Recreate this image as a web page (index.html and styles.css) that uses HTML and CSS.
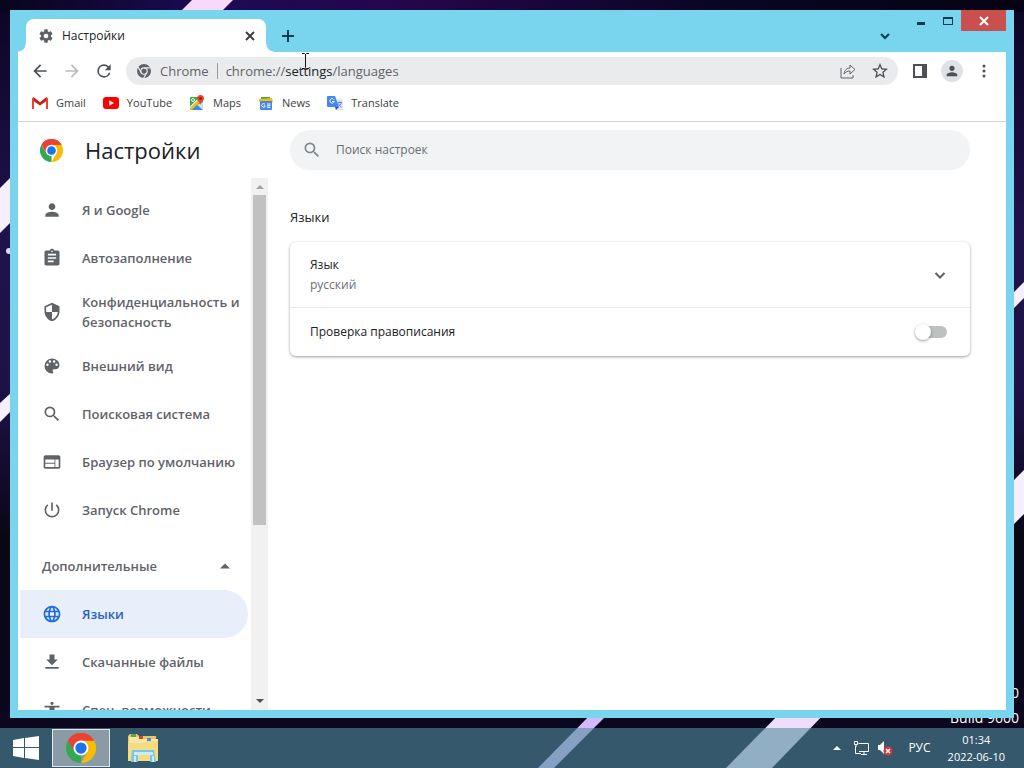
FILE: index.html
```html
<!DOCTYPE html>
<html lang="ru">

<head>
    <meta charset="UTF-8">
    <meta name="viewport" content="width=device-width, initial-scale=1.0">
    <title>Настройки</title>
    <link rel="stylesheet" href="styles.css">
</head>

<body>
    <!-- shared icons -->
    <svg class="defs" width="0" height="0" aria-hidden="true">
        <symbol id="chrome" viewBox="0 0 48 48">
            <path fill="#ea4335" d="M24 24 3.2 12A24 24 0 0 1 44.8 12z" />
            <path fill="#34a853" d="M24 24 24 48A24 24 0 0 1 3.2 12L13.600 30z" />
            <path fill="#fbbc04" d="M24 24 24 12H44.8A24 24 0 0 1 24 48L34.400 30z" />
            <path fill="#ea4335" d="M3.2 12A24 24 0 0 1 44.8 12H24L13.600 30z" />
            <circle cx="24" cy="24" r="12" fill="#fff" />
            <circle cx="24" cy="24" r="9" fill="#1a73e8" />
        </symbol>
        <symbol id="search" viewBox="0 0 24 24">
            <path d="M15.500 14h-.79l-.28-.27A6.470 6.470 0 0 0 16 9.500 6.500 6.500 0 1 0 9.500 16c1.610 0 3.090-.59 4.230-1.570l.27.28v.79l5 4.990L20.490 19l-4.990-5zm-6 0C7.010 14 5 11.990 5 9.500S7.010 5 9.500 5 14 7.010 14 9.500 11.990 14 9.500 14z" />
        </symbol>
        <symbol id="person" viewBox="0 0 24 24">
            <path d="M12 12c2.210 0 4-1.790 4-4s-1.790-4-4-4-4 1.790-4 4 1.790 4 4 4zm0 2c-2.670 0-8 1.340-8 4v2h16v-2c0-2.660-5.330-4-8-4z" />
        </symbol>
    </svg>

    <div class="desktop">
        <svg class="wallpaper" viewBox="0 0 1024 768" preserveAspectRatio="none" aria-hidden="true">
            <defs>
                <linearGradient id="night" x1="0" y1="0" x2="0" y2="1">
                    <stop offset="0" stop-color="#0b0524" />
                    <stop offset=".3" stop-color="#21124d" />
                    <stop offset=".52" stop-color="#1d1144" />
                    <stop offset=".7" stop-color="#090716" />
                    <stop offset="1" stop-color="#0b0720" />
                </linearGradient>
                <linearGradient id="glow" x1="0" y1="0" x2="1" y2="0">
                    <stop offset="0" stop-color="#08051c" />
                    <stop offset=".2" stop-color="#1d0a55" />
                    <stop offset=".4" stop-color="#25064b" />
                    <stop offset=".7" stop-color="#0a0524" />
                    <stop offset="1" stop-color="#050313" />
                </linearGradient>
            </defs>
            <rect width="1024" height="768" fill="url(#night)" />
            <rect width="1024" height="12" fill="url(#glow)" />
            <path fill="#f6d9fb" d="M192 0h41l-12 12h-41z" />
            <path fill="#f6efff" d="M0 188 12 176V221L0 233zM0 403 12 392V410L0 422zM1012 294 1024 282V298L1012 310zM1012 482 1024 470V514L1012 526z" />
            <path fill="#d3b8fb" d="M597 708h17L554 768H538z" />
            <path fill="#f0dcfb" d="M785 708h45L772 768H726z" />
            <circle cx="9" cy="251" r="3" fill="#e4d8f8" />
        </svg>
        <p class="watermark">0<br>Build 9600</p>

        <div class="window">
            <header class="titlebar">
                <div class="tab">
                    <svg class="icon-16" viewBox="0 0 24 24">
                        <path d="M19.430 12.980c.04-.32.07-.64.07-.98s-.03-.66-.07-.98l2.110-1.650c.19-.15.24-.42.12-.64l-2-3.460c-.12-.22-.39-.3-.61-.22l-2.490 1c-.52-.4-1.080-.73-1.690-.98l-.38-2.650A.49.49 0 0 0 14 2h-4c-.25 0-.46.18-.49.42l-.38 2.650c-.61.25-1.170.59-1.690.98l-2.490-1c-.23-.09-.49 0-.61.22l-2 3.460c-.13.22-.07.49.12.64l2.110 1.650c-.04.32-.07.65-.07.98s.03.66.07.98l-2.110 1.650c-.19.15-.24.42-.12.64l2 3.460c.12.22.39.3.61.22l2.490-1c.52.4 1.080.73 1.690.98l.38 2.650c.03.24.24.42.49.42h4c.25 0 .46-.18.49-.42l.38-2.650c.61-.25 1.170-.59 1.690-.98l2.490 1c.23.09.49 0 .61-.22l2-3.460c.12-.22.07-.49-.12-.64zM12 15.500a3.500 3.500 0 1 1 0-7 3.500 3.500 0 0 1 0 7z" />
                    </svg>
                    <span class="tab-title">Настройки</span>
                    <button class="icon-btn" aria-label="Закрыть вкладку">
                        <svg class="icon-16 line" viewBox="0 0 16 16"><path d="M4 4l8 8M12 4l-8 8" /></svg>
                    </button>
                </div>
                <button class="icon-btn new-tab" aria-label="Новая вкладка">
                    <svg class="icon-16 line" viewBox="0 0 16 16"><path d="M8 2v12M2 8h12" /></svg>
                </button>
                <button class="icon-btn tab-search" aria-label="Поиск вкладок">
                    <svg class="icon-16 line" viewBox="0 0 16 16"><path d="M4 6l4 4 4-4" /></svg>
                </button>
                <div class="window-buttons">
                    <button class="win-btn" aria-label="Свернуть">
                        <svg width="12" height="12"><path fill="#0c3a50" d="M2 7h8v3H2z" /></svg>
                    </button>
                    <button class="win-btn" aria-label="Развернуть">
                        <svg width="12" height="12"><path fill="#0c3a50" fill-rule="evenodd" d="M1 2h10v8H1zM2 4v5h8V4z" /></svg>
                    </button>
                    <button class="win-btn close" aria-label="Закрыть">
                        <svg width="10" height="10" stroke="#fff" stroke-width="2"><path d="M1 1l8 8M9 1l-8 8" /></svg>
                    </button>
                </div>
            </header>

            <div class="toolbar">
                <button class="icon-btn" aria-label="Назад">
                    <svg class="icon-20" viewBox="0 0 24 24"><path d="M20 11H7.830l5.590-5.590L12 4l-8 8 8 8 1.410-1.410L7.830 13H20v-2z" /></svg>
                </button>
                <button class="icon-btn" aria-label="Вперёд" disabled>
                    <svg class="icon-20" viewBox="0 0 24 24"><path d="M12 4l-1.410 1.410L16.170 11H4v2h12.170l-5.580 5.590L12 20l8-8z" /></svg>
                </button>
                <button class="icon-btn" aria-label="Обновить">
                    <svg class="icon-20" viewBox="0 0 24 24"><path d="M17.650 6.350A7.960 7.960 0 0 0 12 4a8 8 0 1 0 7.730 10h-2.080A6 6 0 1 1 12 6c1.660 0 3.140.69 4.220 1.780L13 11h7V4z" /></svg>
                </button>
                <div class="omnibox">
                    <svg class="icon-14" viewBox="0 0 48 48">
                        <circle cx="24" cy="24" r="24" />
                        <g fill="none" stroke="#e9ebed" stroke-width="4">
                            <circle cx="24" cy="24" r="11" />
                            <path d="M24 13h22M14.500 29.500 3.500 10.400M33.500 29.500 22.500 48.600" />
                        </g>
                    </svg>
                    <span class="origin">Chrome</span>
                    <div class="url" role="textbox" aria-label="Адресная строка" contenteditable="true" spellcheck="false">chrome://<b>settings</b>/languages</div>
                    <button class="icon-btn" aria-label="Поделиться">
                        <svg class="icon-16 line thin" viewBox="0 0 16 16"><path d="M1 5v10h12v-3M4 11c.5-4 3-6 6-6V2l5 4.500-5 4.500V8c-2.500 0-4.500 1-6 3z" /></svg>
                    </button>
                    <button class="icon-btn" aria-label="Добавить в закладки">
                        <svg class="icon-16" viewBox="2 2 20 20"><path d="M22 9.240l-7.190-.62L12 2 9.190 8.630 2 9.240l5.460 4.730L5.820 21 12 17.270 18.180 21l-1.630-7.030zM12 15.400l-3.760 2.270 1-4.280-3.320-2.880 4.380-.38L12 6.100l1.710 4.040 4.380.38-3.320 2.880 1 4.280z" /></svg>
                    </button>
                </div>
                <button class="icon-btn" aria-label="Боковая панель">
                    <svg class="icon-16" viewBox="0 0 16 16"><path fill-rule="evenodd" d="M1 1h14v14H1zM3 3v10h7V3z" /></svg>
                </button>
                <button class="icon-btn profile" aria-label="Профиль">
                    <svg class="icon-16"><use href="#person" /></svg>
                </button>
                <button class="icon-btn" aria-label="Меню">
                    <svg class="icon-16" viewBox="0 0 16 16"><circle cx="8" cy="3" r="1.500" /><circle cx="8" cy="8" r="1.500" /><circle cx="8" cy="13" r="1.500" /></svg>
                </button>
            </div>

            <nav class="bookmarks">
                <a href="#">
                    <svg class="icon-16" viewBox="0 0 16 16">
                        <path fill="#c5221f" d="M0 3.500 1.500 2 8 7.300 14.500 2 16 3.500V5L8 10.500 0 5z" />
                        <path fill="#fff" d="M3 2h10L8 6z" />
                        <path fill="#ea4335" d="M0 3h2v11H0zM14 3h2v11h-2z" />
                    </svg>Gmail
                </a>
                <a href="#">
                    <svg class="icon-16" viewBox="0 0 16 16">
                        <rect y="2" width="16" height="12" rx="3" fill="#f00" />
                        <path fill="#fff" d="M6.300 5.300v5.400L11 8z" />
                    </svg>YouTube
                </a>
                <a href="#">
                    <svg class="icon-16" viewBox="0 0 16 16">
                        <rect x="1" y="2" width="13" height="13" rx="1" fill="#34a853" />
                        <path fill="#fbbc04" d="M1 13 12 2l2 2L3 15H1z" />
                        <path fill="#fff" d="M1 11.500 10.500 2H12L1 13z" />
                        <path fill="#d5dde8" d="M8 10l6 5V7z" />
                        <path fill="#4285f4" d="M3 15l5-5 5 5z" />
                        <circle cx="4" cy="5" r="1.500" fill="none" stroke="#fff" />
                        <path fill="#ea4335" d="M11.500 0A3.500 3.500 0 0 0 8 3.500C8 6 11 7 11.500 10 12 7 15 6 15 3.500A3.500 3.500 0 0 0 11.500 0z" />
                        <circle cx="11.500" cy="3.500" r="1.300" fill="#811411" />
                    </svg>Maps
                </a>
                <a href="#">
                    <svg class="icon-16" viewBox="0 0 16 16">
                        <path fill="#34a853" d="M3 2h9v5H3z" />
                        <path fill="#fbbc04" d="M1 4l13-1 1 4H1z" />
                        <rect x="2" y="6" width="12" height="9" rx="1" fill="#4285f4" />
                        <path fill="none" stroke="#fff" d="M7 9.300A1.800 1.800 0 1 0 7.300 11H5.800" />
                        <path stroke="#fff" d="M9 9h3.500M9 10.700h3.500M9 12.400h3.500" />
                    </svg>News
                </a>
                <a href="#">
                    <svg class="icon-16" viewBox="0 0 16 16">
                        <path fill="#e4e6ea" d="M6 4h8.500L16 5v10H9z" />
                        <path fill="#4285f4" d="M1 1h7l4 11H1a1 1 0 0 1-1-1V2a1 1 0 0 1 1-1z" />
                        <path fill="#1a56b8" d="M8 12h4l-3 3z" />
                        <path fill="none" stroke="#fff" d="M7 4.700A2.200 2.200 0 1 0 7.200 6.500H5" />
                        <path fill="none" stroke="#4285f4" d="M10.500 7.500H15M13 6.500v1M14.500 7.500c-.5 2-2 3-3 3.500M11.500 8.500c.5 1.500 2 3 3 3.500" />
                    </svg>Translate
                </a>
            </nav>

            <div class="settings">
                <aside class="sidebar">
                    <div class="brand">
                        <svg class="logo"><use href="#chrome" /></svg>
                        <h1>Настройки</h1>
                    </div>
                    <div class="menu-scroller">
                        <nav class="menu">
                            <a href="#"><svg class="icon-20"><use href="#person" /></svg>Я и Google</a>
                            <a href="#">
                                <svg class="icon-20" viewBox="0 0 24 24"><path d="M19 3h-4.180C14.400 1.840 13.300 1 12 1s-2.400.84-2.820 2H5a2 2 0 0 0-2 2v14c0 1.100.9 2 2 2h14a2 2 0 0 0 2-2V5a2 2 0 0 0-2-2zm-7 0a1 1 0 1 1 0 2 1 1 0 0 1 0-2zm2 14H7v-2h7zm3-4H7v-2h10zm0-4H7V7h10z" /></svg>Автозаполнение
                            </a>
                            <a href="#" class="two-line">
                                <svg class="icon-20" viewBox="0 0 24 24"><path d="M12 1 3 5v6c0 5.550 3.840 10.740 9 12 5.160-1.260 9-6.450 9-12V5zm0 10.990h7c-.53 4.120-3.280 7.790-7 8.940V12H5V6.300l7-3.110z" /></svg>Конфиденциальность и безопасность
                            </a>
                            <a href="#">
                                <svg class="icon-20" viewBox="0 0 24 24"><path d="M12 3a9 9 0 0 0-9 9 9 9 0 0 0 9 9c.83 0 1.500-.67 1.500-1.500 0-.39-.15-.74-.39-1.010a1.490 1.490 0 0 1 1.110-2.490H16c2.760 0 5-2.240 5-5 0-4.420-4.030-8-9-8zM6.500 12a1.500 1.500 0 1 1 0-3 1.500 1.500 0 0 1 0 3zm3-4a1.500 1.500 0 1 1 0-3 1.500 1.500 0 0 1 0 3zm5 0a1.500 1.500 0 1 1 0-3 1.500 1.500 0 0 1 0 3zm3 4a1.500 1.500 0 1 1 0-3 1.500 1.500 0 0 1 0 3z" /></svg>Внешний вид
                            </a>
                            <a href="#"><svg class="icon-20"><use href="#search" /></svg>Поисковая система</a>
                            <a href="#">
                                <svg class="icon-20" viewBox="0 0 24 24"><path d="M20 4H4a2 2 0 0 0-2 2v12c0 1.100.9 2 2 2h16a2 2 0 0 0 2-2V6a2 2 0 0 0-2-2zm-5 14H4v-4h11zm0-5H4V9h11zm5 5h-4V9h4z" /></svg>Браузер по умолчанию
                            </a>
                            <a href="#">
                                <svg class="icon-20" viewBox="0 0 24 24"><path d="M13 3h-2v10h2zm4.830 2.170-1.420 1.420A6.920 6.920 0 0 1 19 12a7 7 0 1 1-11.420-5.420L6.170 5.170A8.930 8.930 0 0 0 3 12a9 9 0 0 0 18 0c0-2.740-1.230-5.180-3.170-6.830z" /></svg>Запуск Chrome
                            </a>
                            <button class="advanced">
                                Дополнительные
                                <svg width="10" height="6"><path d="M0 5.500 5 .5l5 5z" /></svg>
                            </button>
                            <a href="#" class="selected">
                                <svg class="icon-20" viewBox="0 0 24 24"><path d="M11.990 2C6.470 2 2 6.480 2 12s4.470 10 9.990 10C17.520 22 22 17.520 22 12S17.520 2 11.990 2zm6.930 6h-2.950a15.650 15.650 0 0 0-1.380-3.560A8.030 8.030 0 0 1 18.920 8zM12 4.040c.83 1.200 1.480 2.530 1.910 3.960h-3.820c.43-1.430 1.080-2.760 1.910-3.960zM4.260 14C4.100 13.360 4 12.690 4 12s.1-1.360.26-2h3.380c-.08.66-.14 1.320-.14 2s.06 1.340.14 2zm.82 2h2.950c.32 1.250.78 2.450 1.380 3.560A7.990 7.990 0 0 1 5.080 16zm2.950-8H5.080a7.990 7.990 0 0 1 4.330-3.560A15.650 15.650 0 0 0 8.030 8zM12 19.960c-.83-1.200-1.480-2.530-1.910-3.960h3.820A13.800 13.800 0 0 1 12 19.960zM14.340 14H9.660c-.09-.66-.16-1.320-.16-2s.07-1.350.16-2h4.680c.09.65.16 1.320.16 2s-.07 1.340-.16 2zm.25 5.560c.6-1.110 1.060-2.310 1.380-3.560h2.950a8.030 8.030 0 0 1-4.330 3.560zM16.360 14c.08-.66.14-1.320.14-2s-.06-1.340-.14-2h3.380c.16.64.26 1.310.26 2s-.1 1.360-.26 2z" /></svg>Языки
                            </a>
                            <a href="#">
                                <svg class="icon-20" viewBox="0 0 24 24"><path d="M19 9h-4V3H9v6H5l7 7zM4 18v2h16v-2z" /></svg>Скачанные файлы
                            </a>
                            <a href="#">
                                <svg class="icon-20" viewBox="0 0 24 24"><path d="M12 2a2 2 0 1 1 0 4 2 2 0 0 1 0-4zm9 7h-6v13h-2v-6h-2v6H9V9H3V7h18z" /></svg>Спец. возможности
                            </a>
                        </nav>
                        <div class="scrollbar" aria-hidden="true">
                            <svg width="8" height="17"><path fill="#a3a3a3" d="M0 11 4 7l4 4z" /></svg>
                            <div class="thumb"></div>
                            <svg width="8" height="17"><path fill="#505050" d="M0 6l4 4 4-4z" /></svg>
                        </div>
                    </div>
                </aside>

                <main class="content">
                    <label class="search-box">
                        <svg class="icon-20"><use href="#search" /></svg>
                        <input type="search" placeholder="Поиск настроек" aria-label="Поиск настроек">
                    </label>
                    <h2>Языки</h2>
                    <section class="card">
                        <button class="row language">
                            <span class="row-text">Язык<small>русский</small></span>
                            <svg class="icon-20" viewBox="0 0 20 20"><path fill="none" stroke="#5f6368" stroke-width="2" d="M5.500 8l4.500 4.500L14.500 8" /></svg>
                        </button>
                        <div class="row spelling">
                            <label for="spellcheck">Проверка правописания</label>
                            <input type="checkbox" id="spellcheck" class="toggle">
                        </div>
                    </section>
                </main>
            </div>
        </div>
    </div>

    <footer class="taskbar">
        <button class="start" aria-label="Пуск">
            <svg width="28" height="26" fill="#fff"><path d="M1 5l11-2v9H1zM13 3l14-2v11H13zM1 13h11v10L1 21zM13 13h14v12l-14-2z" /></svg>
        </button>
        <button class="task active" aria-label="Google Chrome">
            <svg width="30" height="30"><use href="#chrome" /></svg>
        </button>
        <button class="task" aria-label="Проводник">
            <svg width="34" height="32" viewBox="0 0 34 32">
                <path fill="#e8c766" d="M2 4l2-2h7l2 2h17v24H2z" />
                <path fill="#4fae4b" d="M5 2h5v3H5z" />
                <path fill="#f8e7a4" d="M3 5h12l2 2h15v22H3z" />
                <path fill="#c9472e" d="M13 4h4v3h-4z" />
                <path fill="#4a8fd0" d="M21 6h4v3h-4z" />
                <path fill="#f5dc83" d="M2 11h16l2-2h12v20H2z" />
                <path fill="#7cc5ea" d="M6 18h22l2 12h-6v-7H12v7H5z" />
                <path fill="#c9ebfa" d="M8 20h19v3H8zM8 24h2v6H8zM26 24h2v6h-2z" />
            </svg>
        </button>
        <div class="tray">
            <svg width="8" height="4" fill="#fff"><path d="M0 4l4-4 4 4z" /></svg>
            <svg class="icon-16 network" viewBox="0 0 16 16" fill="none" stroke="#fff">
                <path d="M5.500 3.500h10v8H6M8 14.500h6M11 12v2M2.500 6v7.500H8M1.500 1.500h3v3h-3zM3 5v2" />
            </svg>
            <svg class="icon-16" viewBox="0 0 16 16">
                <path fill="#fff" d="M1 5h2l4-4v13l-4-4H1z" />
                <circle cx="11" cy="11" r="4.500" fill="#d8353a" />
                <path stroke="#fff" stroke-width="1.500" d="M9 9l4 4M13 9l-4 4" />
            </svg>
            <span class="lang">РУС</span>
            <time class="clock" datetime="2022-06-10T01:34"><span>01:34</span><span>2022-06-10</span></time>
        </div>
    </footer>

    <svg class="cursor" width="9" height="16" fill="none" stroke="#111"><path d="M1 .5h2.500l1 1 1-1H8M4.500 1v13M1 15.500h2.500l1-1 1 1H8" /></svg>
</body>

</html>
```

FILE: styles.css
```css
* {
    margin: 0;
    padding: 0;
    box-sizing: border-box;
}

body {
    display: flex;
    flex-direction: column;
    height: 100vh;
    overflow: hidden;
    background-color: #0b0720;
    font-family: "Open Sans", "Noto Sans", sans-serif;
    font-size: 13px;
    line-height: 20px;
    color: #202124;
}

button {
    font: inherit;
    color: inherit;
    background: none;
    border: 0;
    cursor: pointer;
}

a {
    color: inherit;
    text-decoration: none;
}

svg {
    flex-shrink: 0;
}

.defs {
    position: absolute;
}

.icon-14 {
    width: 14px;
    height: 14px;
}

.icon-16 {
    width: 16px;
    height: 16px;
}

.icon-20 {
    width: 20px;
    height: 20px;
}

.icon-btn {
    display: flex;
    align-items: center;
    justify-content: center;
    fill: #4d5156;
    stroke: #3c4043;
    stroke-width: 0;
}

.icon-btn:disabled {
    fill: #babcbe;
}

.line {
    fill: none;
    stroke-width: 2;
}

.thin {
    stroke-width: 1;
}

/* desktop */
.desktop {
    flex: 1;
    min-height: 0;
    display: flex;
    padding: 10px;
}

.wallpaper {
    position: absolute;
    inset: 0;
    width: 100%;
    height: 100%;
    z-index: -2;
}

.watermark {
    position: absolute;
    right: 5px;
    bottom: 38px;
    z-index: -1;
    color: #fff;
    font-size: 14px;
    line-height: 25px;
    text-align: right;
}

.window {
    flex: 1;
    min-width: 0;
    display: flex;
    flex-direction: column;
    border: 8px solid #78d5ed;
    border-top: 0;
    background-color: #fff;
}

/* title bar */
.titlebar {
    display: flex;
    align-items: flex-end;
    height: 42px;
    padding-left: 8px;
    background-color: #78d5ed;
}

.tab {
    position: relative;
    display: flex;
    align-items: center;
    gap: 8px;
    width: 240px;
    height: 33px;
    padding: 0 8px 0 12px;
    border-radius: 8px 8px 0 0;
    background-color: #fff;
    fill: #5f6368;
    font-size: 12px;
}

/* curved feet of the active tab */
.tab::before,
.tab::after {
    content: "";
    position: absolute;
    bottom: 0;
    width: 8px;
    height: 8px;
}

.tab::before {
    right: 100%;
    background: radial-gradient(circle at 0 0, transparent 7px, #fff 8px);
}

.tab::after {
    left: 100%;
    background: radial-gradient(circle at 100% 0, transparent 7px, #fff 8px);
}

.tab-title {
    flex: 1;
}

.new-tab {
    height: 33px;
    margin-left: 14px;
    stroke: #0c3a50;
}

.tab-search {
    height: 33px;
    margin-left: auto;
    margin-right: 14px;
    stroke: #0c3a50;
}

.window-buttons {
    display: flex;
    align-self: flex-start;
}

.win-btn {
    display: flex;
    align-items: center;
    justify-content: center;
    width: 27px;
    height: 21px;
}

.win-btn.close {
    width: 45px;
    background-color: #c9504f;
}

/* toolbar */
.toolbar {
    display: flex;
    align-items: center;
    gap: 12px;
    height: 38px;
    padding: 0 14px 0 12px;
}

.omnibox {
    flex: 1;
    display: flex;
    align-items: center;
    gap: 8px;
    height: 28px;
    padding: 0 10px 0 11px;
    margin-right: 2px;
    border-radius: 14px;
    background-color: #e9ebed;
    fill: #5f6368;
    color: #5f6368;
}

.origin {
    line-height: 16px;
    margin-left: 1px;
    padding-right: 8px;
    border-right: 1px solid #9a9da1;
}

.url {
    flex: 1;
    outline: none;
}

.url b {
    color: #202124;
    font-weight: 400;
}

.omnibox .icon-btn {
    margin-left: 8px;
    stroke: #5f6368;
}

.profile {
    width: 22px;
    height: 22px;
    margin: 0 1px;
    border-radius: 50%;
    background-color: #dee1e8;
}

/* bookmarks */
.bookmarks {
    display: flex;
    align-items: center;
    gap: 17px;
    height: 32px;
    padding: 0 14px 6px;
    border-bottom: 1px solid #d2d4d6;
    color: #3c4043;
    font-size: 11px;
}

.bookmarks a {
    display: flex;
    align-items: center;
    gap: 8px;
}

/* settings page */
.settings {
    flex: 1;
    min-height: 0;
    display: flex;
}

.sidebar {
    width: 250px;
    display: flex;
    flex-direction: column;
}

.brand {
    display: flex;
    align-items: center;
    gap: 22px;
    height: 56px;
    padding-left: 22px;
}

.logo {
    width: 23px;
    height: 23px;
}

.brand h1 {
    font-size: 22px;
    font-weight: 500;
}

.menu-scroller {
    flex: 1;
    min-height: 0;
    display: flex;
    justify-content: space-between;
}

.menu {
    width: 230px;
    padding: 8px 0 0 2px;
    overflow: hidden;
    color: #5f6368;
    fill: #5f6368;
    font-weight: 600;
}

.menu a {
    display: flex;
    align-items: center;
    gap: 20px;
    height: 48px;
    padding-left: 22px;
    border-radius: 0 24px 24px 0;
}

.menu .two-line {
    height: 60px;
}

.menu .selected {
    background-color: #e8effb;
    color: #2a62c4;
    fill: #1a6be0;
}

.advanced {
    display: flex;
    align-items: center;
    justify-content: space-between;
    width: 100%;
    height: 48px;
    margin-top: 8px;
    padding: 0 18px 0 22px;
}

.scrollbar {
    display: flex;
    flex-direction: column;
    align-items: center;
    width: 17px;
    background-color: #f1f1f1;
}

.thumb {
    width: 13px;
    height: 62%;
    margin-bottom: auto;
    background-color: #c1c1c1;
}

.content {
    flex: 1;
    padding: 8px 36px 0 22px;
}

.search-box {
    display: flex;
    align-items: center;
    gap: 14px;
    height: 40px;
    padding: 0 12px;
    border-radius: 20px;
    background-color: #f1f3f4;
    fill: #80868b;
    font-size: 12px;
}

.search-box input {
    flex: 1;
    border: 0;
    outline: none;
    background: none;
    font: inherit;
    color: #202124;
}

.search-box input::placeholder {
    color: #6b6f74;
}

.content h2 {
    margin: 37px 0 15px;
    font-size: 13px;
    font-weight: 400;
}

.card {
    border-radius: 6px;
    box-shadow: 0 1px 3px rgba(60, 64, 67, 0.5);
    font-size: 12px;
}

.row {
    display: flex;
    align-items: center;
    justify-content: space-between;
    width: 100%;
    padding: 0 20px;
    text-align: left;
}

.language {
    height: 65px;
}

.row-text small {
    display: block;
    font-size: 12px;
    color: #6b6f74;
}

.spelling {
    height: 49px;
    padding-right: 23px;
    border-top: 1px solid #e6e7e9;
}

/* switch */
.toggle {
    appearance: none;
    display: flex;
    align-items: center;
    width: 30px;
    height: 12px;
    border-radius: 6px;
    background-color: #bdc1c0;
    cursor: pointer;
}

.toggle::before {
    content: "";
    width: 16px;
    height: 16px;
    margin-left: -2px;
    border-radius: 50%;
    background-color: #fff;
    box-shadow: 0 1px 3px rgba(0, 0, 0, 0.4);
}

.toggle:checked {
    justify-content: flex-end;
    background-color: #8ab4f8;
}

.toggle:checked::before {
    background-color: #1a73e8;
}

/* taskbar */
.taskbar {
    display: flex;
    align-items: center;
    height: 40px;
    padding-right: 19px;
    background-color: rgba(83, 143, 160, 0.6);
    color: #fff;
}

.start {
    width: 52px;
    height: 40px;
    display: flex;
    align-items: center;
    justify-content: center;
}

.task {
    display: flex;
    align-items: center;
    justify-content: center;
    width: 58px;
    height: 38px;
    margin-right: 4px;
}

.task.active {
    border: 1px solid #e1e9ed;
    background-color: #8b9ba5;
}

.tray {
    display: flex;
    align-items: center;
    margin-left: auto;
    font-size: 12px;
}

.network {
    margin: 0 8px 0 12px;
}

.lang {
    margin: 0 17px 0 15px;
}

.clock {
    display: flex;
    flex-direction: column;
    align-items: center;
    font-size: 11px;
    line-height: 17px;
}

/* text pointer */
.cursor {
    position: absolute;
    left: 301px;
    top: 53px;
}
```
